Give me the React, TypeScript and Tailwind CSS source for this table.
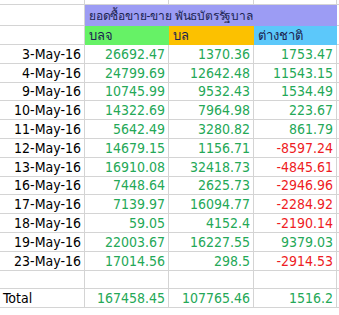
import React from "react";

const rows: [string, string, string, string][] = [
  ["3-May-16", "26692.47", "1370.36", "1753.47"],
  ["4-May-16", "24799.69", "12642.48", "11543.15"],
  ["9-May-16", "10745.99", "9532.43", "1534.49"],
  ["10-May-16", "14322.69", "7964.98", "223.67"],
  ["11-May-16", "5642.49", "3280.82", "861.79"],
  ["12-May-16", "14679.15", "1156.71", "-8597.24"],
  ["13-May-16", "16910.08", "32418.73", "-4845.61"],
  ["16-May-16", "7448.64", "2625.73", "-2946.96"],
  ["17-May-16", "7139.97", "16094.77", "-2284.92"],
  ["18-May-16", "59.05", "4152.4", "-2190.14"],
  ["19-May-16", "22003.67", "16227.55", "9379.03"],
  ["23-May-16", "17014.56", "298.5", "-2914.53"],
];

const font = { fontFamily: '"DejaVu Sans Condensed", "DejaVu Sans", "Noto Sans", sans-serif' };

function Num({ v, w }: { v: string; w: string }) {
  const neg = v.startsWith("-");
  return (
    <div
      className={`${w} h-full border-r border-b border-[#d4d4d4] flex items-center justify-end pr-[3px] ${
        neg ? "text-[#ee1c24]" : "text-[#25a857]"
      }`}
    >
      {v}
    </div>
  );
}

export default function App() {
  return (
    <div className="w-[339px] h-[315px] bg-white overflow-hidden text-[14px] leading-none" style={font}>
      <div className="flex h-[5px]">
        <div className="w-[85px] border-r border-b border-[#d4d4d4]" />
        <div className="w-[84px] border-r border-b border-[#d4d4d4]" />
        <div className="w-[85px] border-r border-b border-[#d4d4d4]" />
        <div className="w-[83px] border-r border-b border-[#d4d4d4]" />
        <div className="flex-1 border-b border-[#d4d4d4]" />
      </div>
      <div className="flex h-[21px]">
        <div className="w-[85px] border-r border-b border-[#d4d4d4]" />
        <div className="w-[252px] bg-[#9c9cf4] flex items-center pl-[4px] text-[#1b2450] whitespace-nowrap text-[12px] tracking-[-0.2px]">
          ยอดซื้อขาย-ขาย พันธบัตรรัฐบาล
        </div>
        <div className="flex-1 border-b border-[#d4d4d4]" />
      </div>
      <div className="flex h-[19px] text-[13px]">
        <div className="w-[85px] border-r border-b border-[#d4d4d4]" />
        <div className="w-[84px] bg-[#66f266] flex items-center pl-[4px] text-[#1b2450]">บลจ</div>
        <div className="w-[85px] bg-[#fcc100] flex items-center pl-[4px] text-[#1b2450]">บล</div>
        <div className="w-[83px] bg-[#5cc8fa] flex items-center pl-[4px] text-[#1b2450]">ต่างชาติ</div>
        <div className="flex-1 border-b border-[#d4d4d4]" />
      </div>
      {rows.map((r) => (
        <div key={r[0]} className="flex h-[18.8px]">
          <div className="w-[85px] h-full border-r border-b border-[#d4d4d4] flex items-center justify-end pr-[3px] text-black">
            {r[0]}
          </div>
          <Num v={r[1]} w="w-[84px]" />
          <Num v={r[2]} w="w-[85px]" />
          <Num v={r[3]} w="w-[83px]" />
          <div className="flex-1 h-full border-b border-[#d4d4d4]" />
        </div>
      ))}
      <div className="flex h-[18.8px]">
        <div className="w-[85px] h-full border-r border-b border-[#d4d4d4]" />
        <div className="w-[84px] h-full border-r border-b border-[#d4d4d4]" />
        <div className="w-[85px] h-full border-r border-b border-[#d4d4d4]" />
        <div className="w-[83px] h-full border-r border-b border-[#d4d4d4]" />
        <div className="flex-1 h-full border-b border-[#d4d4d4]" />
      </div>
      <div className="flex h-[18.8px]">
        <div className="w-[85px] h-full border-r border-b border-[#d4d4d4] flex items-center pl-[3px] text-black">
          Total
        </div>
        <Num v="167458.45" w="w-[84px]" />
        <Num v="107765.46" w="w-[85px]" />
        <Num v="1516.2" w="w-[83px]" />
        <div className="flex-1 h-full border-b border-[#d4d4d4]" />
      </div>
    </div>
  );
}
